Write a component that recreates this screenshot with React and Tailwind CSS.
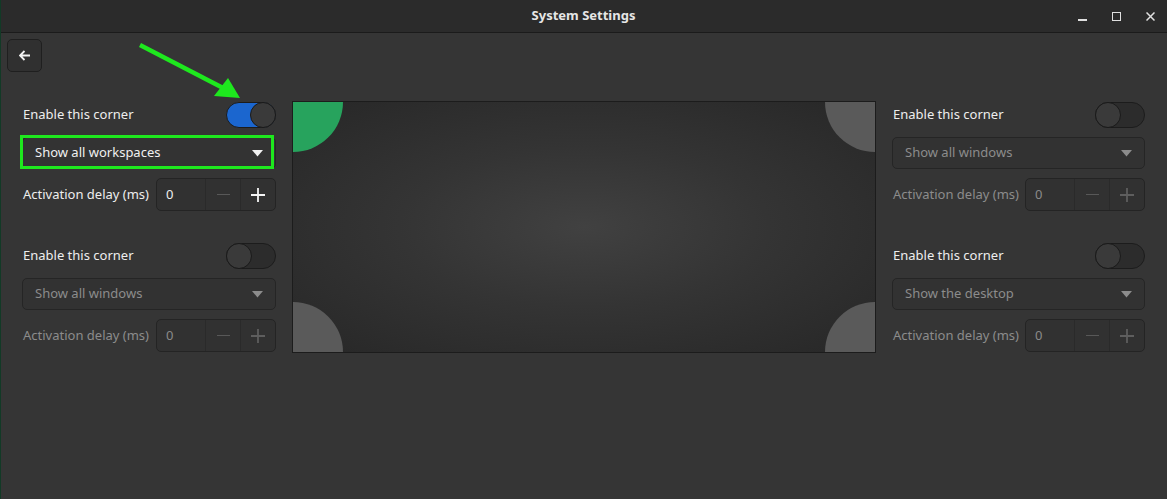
import React from 'react';
import { clsx } from 'clsx';

const font = { fontFamily: '"Noto Sans", "Open Sans", sans-serif' };

const Caret = ({ dim }) => (
  <svg width="11" height="7" viewBox="0 0 11 7">
    <path d="M0 0 L11 0 L5.5 6.5 Z" fill={dim ? '#8c8c8c' : '#f2f2f2'} />
  </svg>
);

const Toggle = ({ on }) => (
  <div
    className={clsx(
      'relative w-[50px] h-[26px] rounded-full border border-[#1c1c1c]',
      on ? 'bg-[#1b66cf]' : 'bg-[#2c2c2c]'
    )}
  >
    <div
      className={clsx(
        'absolute top-[-1px] w-[26px] h-[26px] rounded-full border border-[#1a1a1a] bg-[#3a3a3a]',
        on ? 'right-[-1px]' : 'left-[-1px]'
      )}
    />
  </div>
);

const SpinBox = ({ enabled }) => (
  <div className="flex h-[33px] w-[120px] rounded-[5px] border border-[#242424] bg-[#313131]">
    <div
      className={clsx(
        'w-[49px] flex items-center pl-[9px] text-[13px] border-r border-[#2a2a2a]',
        enabled ? 'text-[#eeeeee]' : 'text-[#8a8a8a]'
      )}
    >
      0
    </div>
    <div className="w-[35px] flex items-center justify-center border-r border-[#2a2a2a]">
      <div className="w-[13px] h-[1.5px] bg-[#585858]" />
    </div>
    <div className="flex-1 flex items-center justify-center">
      <svg width="14" height="14" viewBox="0 0 14 14">
        <path d="M7 0 V14 M0 7 H14" stroke={enabled ? '#f5f5f5' : '#5e5e5e'} strokeWidth="1.8" />
      </svg>
    </div>
  </div>
);

const CornerGroup = ({ on, action, highlight }) => (
  <div className="flex flex-col">
    <div className="flex items-center justify-between h-[26px]">
      <span className="text-[13px] text-[#eeeeee] pl-[1px]">Enable this corner</span>
      <Toggle on={on} />
    </div>
    <div className="relative mt-[9px]">
      <div
        className={clsx(
          'flex items-center justify-between h-[32px] rounded-[5px] border px-[12px]',
          on ? 'bg-[#333333] border-[#262626]' : 'bg-[#323232] border-[#252525]'
        )}
      >
        <span className={clsx('text-[13px]', on ? 'text-[#f0f0f0]' : 'text-[#8c8c8c]')}>{action}</span>
        <Caret dim={!on} />
      </div>
      {highlight && (
        <div className="absolute left-[-2px] top-[-2px] w-[254px] h-[34px] border-[3px] border-[#1ee81e] pointer-events-none" />
      )}
    </div>
    <div className="flex items-center justify-between mt-[9px]">
      <span className={clsx('text-[13px] pl-[1px]', on ? 'text-[#eeeeee]' : 'text-[#8c8c8c]')}>
        Activation delay (ms)
      </span>
      <SpinBox enabled={on} />
    </div>
  </div>
);

const Corner = ({ pos, green }) => {
  const cls = {
    tl: 'top-0 left-0 rounded-br-full',
    tr: 'top-0 right-0 rounded-bl-full',
    bl: 'bottom-0 left-0 rounded-tr-full',
    br: 'bottom-0 right-0 rounded-tl-full',
  }[pos];
  return (
    <div className={clsx('absolute w-[50px] h-[50px]', cls, green ? 'bg-[#27a35d]' : 'bg-[#5a5a5a]')} />
  );
};

export default function App() {
  return (
    <div className="relative w-[1167px] h-[499px] bg-[#353535] overflow-hidden border-l border-[#123a26]" style={font}>
      {/* title bar */}
      <div className="relative h-[33px] bg-[#2b2b2b] border-b border-[#1b1b1b] flex items-center justify-center">
        <span className="text-[13px] font-bold text-[#e6e6e6] ml-[-1px]">System Settings</span>
        <div className="absolute right-0 top-0 h-[32px] flex items-center">
          <div className="w-[34px] flex justify-center">
            <div className="w-[9px] h-[1.5px] bg-[#e0e0e0] mt-[8px]" />
          </div>
          <div className="w-[34px] flex justify-center">
            <div className="w-[9px] h-[9px] border-[1.5px] border-[#e0e0e0]" />
          </div>
          <div className="w-[34px] flex justify-center">
            <svg width="9" height="9" viewBox="0 0 9 9">
              <path d="M0.5 0.5 L8.5 8.5 M8.5 0.5 L0.5 8.5" stroke="#e0e0e0" strokeWidth="1.5" />
            </svg>
          </div>
        </div>
      </div>

      {/* header bar with back button */}
      <div className="pl-[6px] pt-[6px]">
        <button className="w-[35px] h-[33px] rounded-[5px] border border-[#1f1f1f] bg-[#303030] flex items-center justify-center">
          <svg width="12" height="11" viewBox="0 0 12 11">
            <path d="M11 5.5 H1.5 M5.5 1 L1 5.5 L5.5 10" stroke="#f2f2f2" strokeWidth="1.8" fill="none" />
          </svg>
        </button>
      </div>

      {/* main content */}
      <div className="flex items-start gap-[16px] pl-[21px] pt-[30px]">
        <div className="w-[254px] flex flex-col gap-[32px]">
          <CornerGroup on action="Show all workspaces" highlight />
          <CornerGroup action="Show all windows" />
        </div>

        <div className="relative mt-[-1px] w-[584px] h-[252px] border border-[#1c1c1c] overflow-hidden bg-[radial-gradient(ellipse_at_center,#414141_0%,#343434_45%,#272727_100%)]">
          <Corner pos="tl" green />
          <Corner pos="tr" />
          <Corner pos="bl" />
          <Corner pos="br" />
        </div>

        <div className="w-[253px] flex flex-col gap-[32px]">
          <CornerGroup action="Show all windows" />
          <CornerGroup action="Show the desktop" />
        </div>
      </div>

      {/* annotation arrow */}
      <svg className="absolute left-0 top-0 pointer-events-none" width="1167" height="499">
        <path d="M139 45 L224 89" stroke="#1ee81e" strokeWidth="4.5" strokeLinecap="butt" />
        <path d="M239 98 L213 96 L227 78 Z" fill="#1ee81e" />
      </svg>
    </div>
  );
}
